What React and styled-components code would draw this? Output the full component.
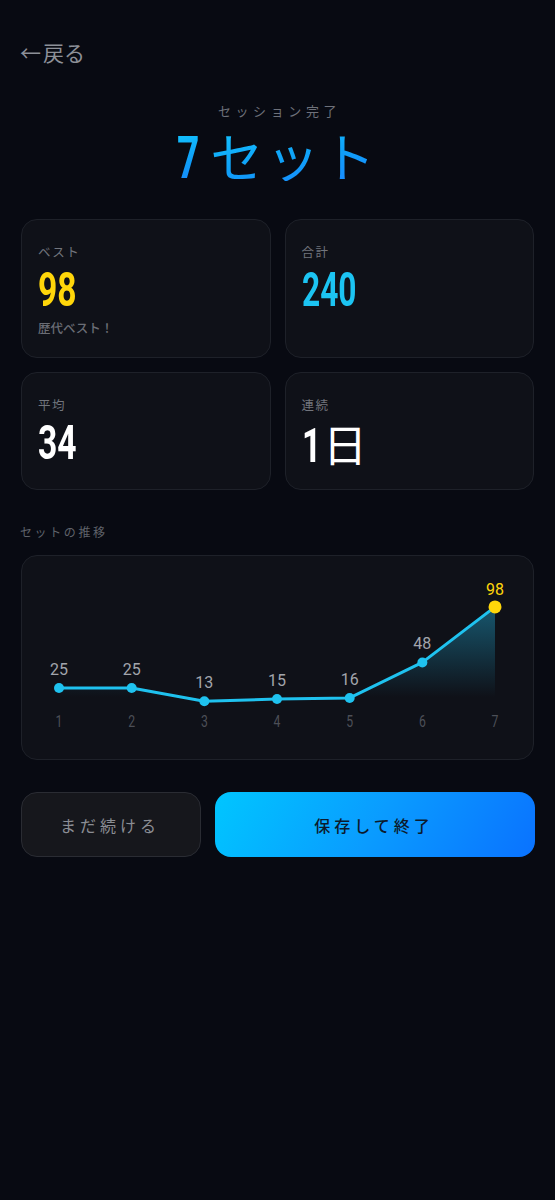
import React from "react";
import styled, { createGlobalStyle } from "styled-components";

const Global = createGlobalStyle`
  html, body { margin: 0; padding: 0; background: #080a12; }
  body { font-family: "Noto Sans CJK JP", "Noto Sans", sans-serif; color: #fff; }
  * { box-sizing: border-box; }
`;

const Page = styled.div`
  width: 555px;
  min-height: 1200px;
  background: #080a12;
  padding: 40px 21px 0 21px;
`;

const Back = styled.div`
  font-size: 21px;
  line-height: 24px;
  color: #8d9098;
  display: flex;
  align-items: center;
  gap: 2px;
  margin-left: -1px;
`;

const Header = styled.div`
  margin-top: 38px;
  display: flex;
  flex-direction: column;
  align-items: center;
`;

const Kicker = styled.div`
  font-size: 13px;
  line-height: 18px;
  letter-spacing: 4.6px;
  color: #6e717a;
  padding-left: 4px;
`;

const Title = styled.div`
  margin-top: 9px;
  height: 52px;
  display: flex;
  align-items: baseline;
  line-height: 52px;
`;

const Cond = styled.span`
  display: inline-block;
  font-family: Roboto, "Liberation Sans", sans-serif;
  font-weight: 700;
  font-size: ${(p) => p.$size}px;
  transform: scaleX(${(p) => p.$sx});
  transform-origin: left center;
  margin-right: ${(p) => -(1 - p.$sx) * 0.562 * p.$size * p.$n}px;
  color: ${(p) => p.$color || "inherit"};
`;

const TitleCond = styled(Cond)`
  line-height: 52px;
  background: linear-gradient(170deg, #12c4ff 0%, #0f9cf7 60%, #1a86ff 100%);
  -webkit-background-clip: text;
  background-clip: text;
  color: transparent;
`;

const TitleJa = styled.span`
  display: inline-block;
  line-height: 52px;
  font-size: 53px;
  letter-spacing: 3px;
  margin-left: 11px;
  font-weight: 400;
  background: linear-gradient(170deg, #14c6ff 0%, #0fa0f8 55%, #1a88ff 100%);
  -webkit-background-clip: text;
  background-clip: text;
  color: transparent;
`;

const Grid = styled.div`
  margin-top: 38px;
  display: grid;
  grid-template-columns: 1fr 1fr;
  grid-template-rows: 139px 118px;
  gap: 14px;
`;

const Card = styled.div`
  background: #0f1118;
  border: 1px solid #1e2129;
  border-radius: 16px;
  padding: 23px 16px 0 16px;
`;

const Label = styled.div`
  font-size: 12.5px;
  line-height: 18px;
  letter-spacing: 1.5px;
  color: #72757d;
`;

const Value = styled.div`
  margin-top: 9px;
  height: 40px;
  line-height: 40px;
  display: flex;
  align-items: baseline;
  white-space: nowrap;
`;

const ValueJa = styled.span`
  display: inline-block;
  font-size: 44px;
  color: #fff;
  margin-left: 2px;
  line-height: 40px;
`;

const Sub = styled.div`
  margin-top: 9px;
  font-size: 12.5px;
  line-height: 18px;
  color: #6a6d75;
  font-weight: 500;
`;

const Section = styled.div`
  margin-top: 34px;
  font-size: 12px;
  line-height: 16px;
  letter-spacing: 2.6px;
  color: #5f626a;
  margin-left: -1px;
`;

const ChartCard = styled.div`
  margin-top: 15px;
  height: 205px;
  background: #0f1118;
  border: 1px solid #1e2129;
  border-radius: 16px;
  overflow: hidden;
`;

const ChartSvg = styled.svg`
  display: block;
  width: 510px;
  height: 203px;
`;

const Buttons = styled.div`
  margin-top: 32px;
  display: flex;
  gap: 14px;
  height: 65px;
`;

const Btn = styled.button`
  border-radius: 16px;
  font-family: "Noto Sans CJK JP", "Noto Sans", sans-serif;
  font-size: 16px;
  letter-spacing: 4px;
  padding-left: 4px;
  cursor: pointer;
  display: flex;
  align-items: center;
  justify-content: center;
  ${(p) =>
    p.$primary
      ? `
    flex: 1;
    margin-right: -1px;
    border: none;
    background: linear-gradient(120deg, #00c6ff 0%, #0a9cff 50%, #0a72ff 100%);
    color: #0c1a2c;
    font-weight: 500;
  `
      : `
    flex: 0 0 180px;
    border: 1px solid #2a2c33;
    background: #16171c;
    color: #8b8d94;
  `}
`;

const data = [25, 25, 13, 15, 16, 48, 98];

function Chart() {
  const x = (i) => 37 + i * 72.67;
  const y = (v) => 159.7 - v * 1.11;
  const pts = data.map((v, i) => [x(i), y(v)]);
  const line = pts.map((p) => p.join(",")).join(" ");
  const area = `${line} ${x(6)},141 ${x(0)},141`;
  return (
    <ChartSvg viewBox="0 0 510 203">
      <defs>
        <linearGradient id="fillg" x1="0" y1="51" x2="0" y2="141" gradientUnits="userSpaceOnUse">
          <stop offset="0" stopColor="#22b8e6" stopOpacity="0.42" />
          <stop offset="1" stopColor="#22b8e6" stopOpacity="0" />
        </linearGradient>
      </defs>
      <polygon points={area} fill="url(#fillg)" />
      <polyline points={line} fill="none" stroke="#1fc2ef" strokeWidth="3" strokeLinejoin="round" />
      {pts.map(([px, py], i) => {
        const last = i === data.length - 1;
        return (
          <g key={i}>
            <circle cx={px} cy={py} r={last ? 6.5 : 5} fill={last ? "#ffd60a" : "#1fc2ef"} />
            <text
              x={px}
              y={py - (last ? 12 : 13)}
              textAnchor="middle"
              fontFamily="Roboto, 'Noto Sans', sans-serif"
              fontSize="16"
              fill={last ? "#ffd60a" : "#a2a5ac"}
            >
              {data[i]}
            </text>
            <text
              transform={`translate(${px},171) scale(0.72,1)`}
              textAnchor="middle"
              fontFamily="Roboto, sans-serif"
              fontSize="17"
              fill="#4c4f57"
            >
              {i + 1}
            </text>
          </g>
        );
      })}
    </ChartSvg>
  );
}

export default function App() {
  return (
    <>
      <Global />
      <Page>
        <Back>
          <span>←</span>
          <span>戻る</span>
        </Back>
        <Header>
          <Kicker>セッション完了</Kicker>
          <Title>
            <TitleCond $size={59} $sx={0.66} $n={1}>7</TitleCond>
            <TitleJa>セット</TitleJa>
          </Title>
        </Header>
        <Grid>
          <Card>
            <Label>ベスト</Label>
            <Value>
              <Cond $size={48} $sx={0.7} $n={2} $color="#ffd60a">98</Cond>
            </Value>
            <Sub>歴代ベスト！</Sub>
          </Card>
          <Card>
            <Label>合計</Label>
            <Value>
              <Cond $size={48} $sx={0.66} $n={3} $color="#1cc4f2">240</Cond>
            </Value>
          </Card>
          <Card>
            <Label>平均</Label>
            <Value>
              <Cond $size={48} $sx={0.7} $n={2} $color="#ffffff">34</Cond>
            </Value>
          </Card>
          <Card>
            <Label>連続</Label>
            <Value>
              <Cond $size={48} $sx={0.7} $n={1} $color="#ffffff">1</Cond>
              <ValueJa>日</ValueJa>
            </Value>
          </Card>
        </Grid>
        <Section>セットの推移</Section>
        <ChartCard>
          <Chart />
        </ChartCard>
        <Buttons>
          <Btn>まだ続ける</Btn>
          <Btn $primary>保存して終了</Btn>
        </Buttons>
      </Page>
    </>
  );
}
